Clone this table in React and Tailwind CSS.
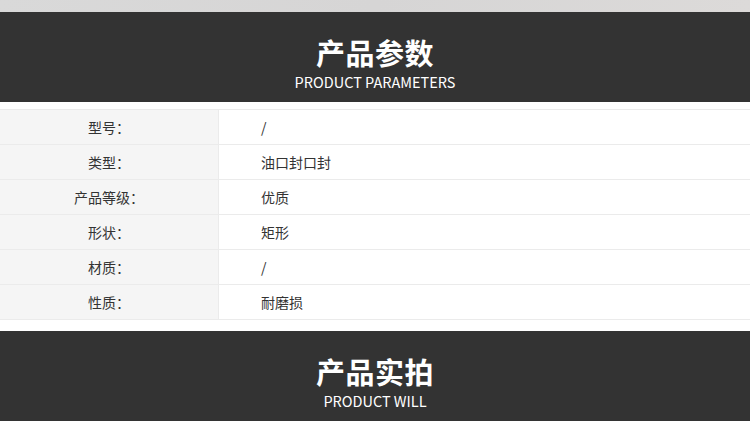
import React from 'react';

const rows = [
  { label: '型号：', value: '/' },
  { label: '类型：', value: '油口封口封' },
  { label: '产品等级：', value: '优质' },
  { label: '形状：', value: '矩形' },
  { label: '材质：', value: '/' },
  { label: '性质：', value: '耐磨损' },
];

function Banner({ title, subtitle }) {
  return (
    <div className="h-[90px] bg-[#333333] flex flex-col items-center text-white">
      <h2 className="mt-[24px] text-[29px] leading-[32px] font-bold tracking-[0.5px]">{title}</h2>
      <p className="mt-[6px] text-[14.5px] leading-[16px]">{subtitle}</p>
    </div>
  );
}

function App() {
  return (
    <div
      className="w-[750px] h-[436px] bg-white overflow-hidden"
      style={{ fontFamily: '"Noto Sans CJK SC", "Noto Sans", sans-serif' }}
    >
      <div className="h-[12px] bg-gradient-to-r from-[#d9d9d9] via-[#d6d5d5] to-[#dcdad9]" />
      <Banner title="产品参数" subtitle="PRODUCT PARAMETERS" />
      <div className="mt-[7px] border-t border-[#ebebeb]">
        {rows.map((row, i) => (
          <div key={i} className="flex h-[35px] border-b border-[#ebebeb] text-[14px] text-[#333333]">
            <div className="w-[219px] bg-[#f5f5f5] border-r border-[#ebebeb] flex items-center justify-center">
              {row.label}
            </div>
            <div className="flex-1 flex items-center pl-[42px]">{row.value}</div>
          </div>
        ))}
      </div>
      <div className="h-[11px]" />
      <Banner title="产品实拍" subtitle="PRODUCT WILL" />
    </div>
  );
}

export default App;
